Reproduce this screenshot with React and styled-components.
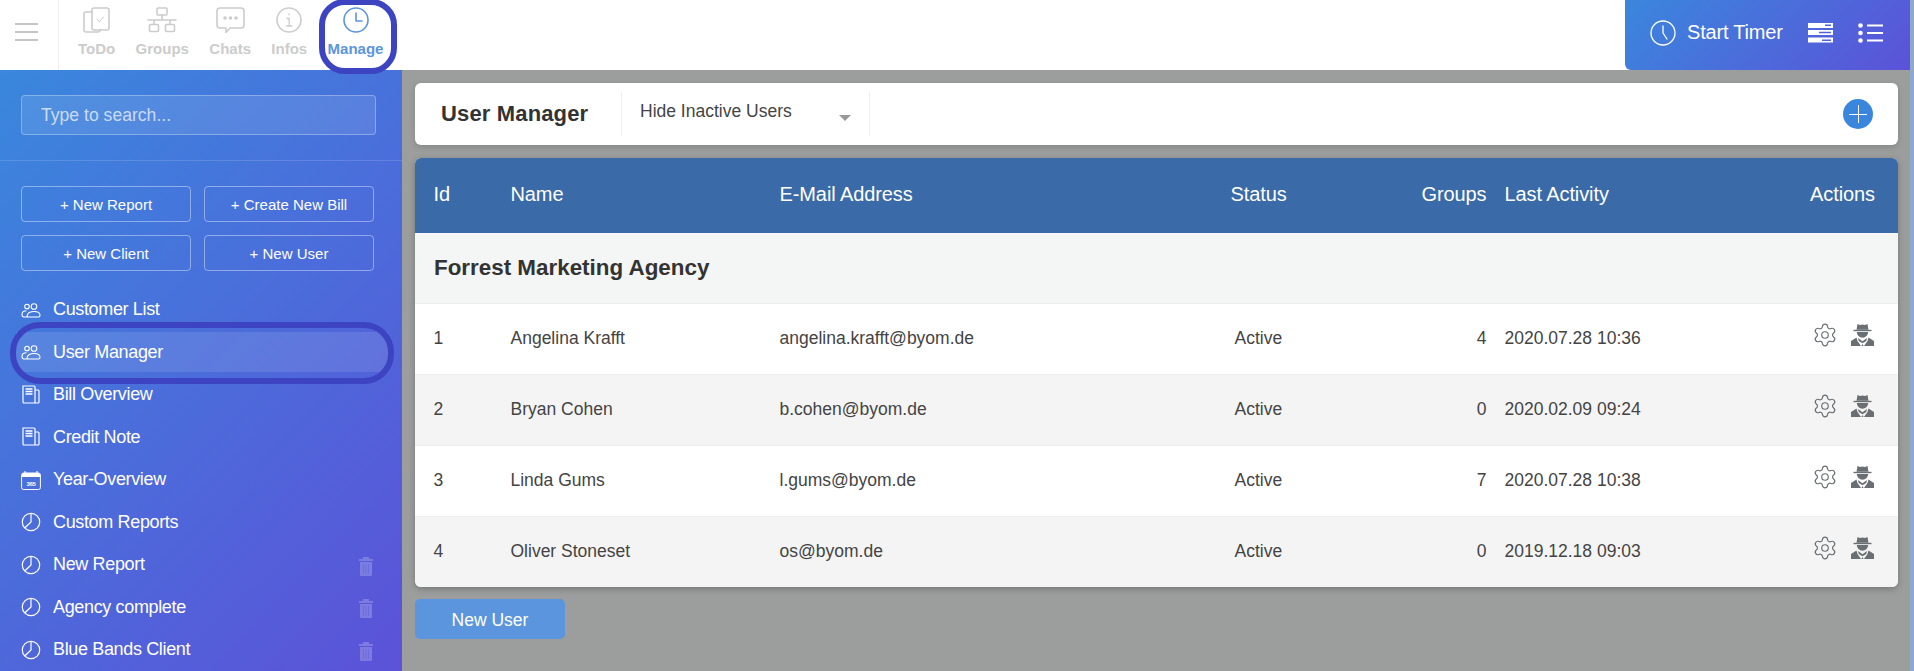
import React from 'react';
import styled, { createGlobalStyle } from 'styled-components';
import { Settings } from 'lucide-react';

const Global = createGlobalStyle`
  html, body { margin: 0; padding: 0; height: 100%; overflow: hidden; }
  body { font-family: "Liberation Sans", Arial, sans-serif; background: #9c9e9e; color: #333; }
  * { box-sizing: border-box; }
`;

const GRADIENT = 'linear-gradient(135deg, #3a87dd 0%, #5c52d8 100%)';

const Page = styled.div`
  width: 1914px; height: 671px; display: flex; flex-direction: column; overflow: hidden;
  background: #9c9e9e; border-right: 4px solid #8fa9cc;
`;
const Top = styled.header`
  height: 70px; flex: none; background: #fff; display: flex; align-items: stretch;
`;
const Burger = styled.button`
  width: 59px; flex: none; border: 0; border-right: 1px solid #eee; background: none; padding: 23px 0 0 15px;
  display: flex; flex-direction: column; gap: 6px;
  span { display: block; height: 2px; width: 23px; background: #c6c6c6; }
`;
const TopNav = styled.nav`
  display: flex; align-items: stretch; flex: 1; padding-left: 8.800px;
`;
const TopItem = styled.div`
  position: relative; padding: 7px 10.200px 0; display: flex; flex-direction: column; align-items: center;
  color: ${p => p.$active ? '#5b95de' : '#ccc'};
  font-size: 15px; font-weight: 700;
  svg { display: block; margin-bottom: 7px; flex: none; }
`;
const Ring = styled.div`
  position: absolute; left: 1.500px; right: -3.500px; top: -1px; height: 75px;
  border: 6px solid #3d44c2; border-radius: 26px; pointer-events: none;
`;
const Timer = styled.div`
  width: 285px; flex: none; background: ${GRADIENT}; border-bottom-left-radius: 6px; color: #fff;
  display: flex; align-items: center; padding: 0 0 5px 25px; font-size: 20px; letter-spacing: -0.2px; white-space: nowrap;
  svg { flex: none; }
`;
const TimerLabel = styled.span` margin-left: 11px; margin-right: 25px; `;
const Body = styled.div` flex: 1; display: flex; min-height: 0; `;
const Side = styled.aside`
  width: 402px; flex: none; background: ${GRADIENT}; color: #fff; display: flex; flex-direction: column;
`;
const SearchWrap = styled.div`
  height: 91px; flex: none; padding: 25px 26px 0 21px; border-bottom: 1px solid rgba(255,255,255,.14);
`;
const Search = styled.div`
  height: 40px; border: 1px solid rgba(255,255,255,.3); background: rgba(255,255,255,.1); border-radius: 4px;
  padding: 1px 0 0 19px; display: flex; align-items: center; font-size: 17.600px; color: rgba(255,255,255,.7);
`;
const QuickGrid = styled.div`
  display: grid; grid-template-columns: 170px 170px; gap: 13px; padding: 25px 0 0 21px;
`;
const Quick = styled.div`
  height: 36px; border: 1px solid rgba(255,255,255,.4); border-radius: 4px; display: flex; align-items: center; justify-content: center;
  font-size: 15px;
`;
const Menu = styled.div` position: relative; padding-top: 17.500px; isolation: isolate; `;
const MenuRow = styled.div`
  position: relative; height: 42.500px; display: flex; align-items: center; padding-left: 21px; font-size: 18px; letter-spacing: -0.35px;
  ${p => p.$active ? `&::before { content: ''; position: absolute; z-index: -1; left: 16px; width: 372px; top: 1px; height: 40px; background: rgba(255,255,255,.1); }` : ''}
  svg.lead { width: 20px; height: 20px; margin-right: 12px; flex: none; }
`;
const Trash = styled.svg`
  position: absolute; left: 358px; top: 12px; width: 16px; height: 20px;
`;
const MenuRing = styled.div`
  position: absolute; left: 10px; top: -9px; width: 384px; height: 62px; border: 6px solid #3d44c2; border-radius: 30px; pointer-events: none;
`;
const Main = styled.main` flex: 1; padding: 13px 12px 0 13px; display: flex; flex-direction: column; `;
const Bar = styled.div`
  height: 62px; background: #fff; border-radius: 6px; display: flex; align-items: center; flex: none;
  box-shadow: 0 2px 6px rgba(0,0,0,.15);
`;
const BarTitle = styled.h1`
  margin: 0; width: 206px; padding-left: 26px; font-size: 22px; font-weight: 700; color: #333; letter-spacing: .15px;
`;
const Select = styled.div`
  width: 249px; height: 44px; border-left: 1px solid #eee; border-right: 1px solid #eee; display: flex; align-items: center; position: relative;
  padding: 0 0 6px 18px; font-size: 17.500px; color: #444;
  &::after { content: ''; position: absolute; right: 18px; top: 23px; border: 6px solid transparent; border-top: 6px solid #999; border-bottom: 0; }
`;
const AddBtn = styled.div`
  margin-left: auto; margin-right: 25px; width: 30px; height: 30px; border-radius: 50%; background: #3a86dc; position: relative;
  &::before, &::after { content: ''; position: absolute; background: #fff; }
  &::before { left: 6px; right: 6px; top: 14.500px; height: 1.400px; }
  &::after { top: 6px; bottom: 6px; left: 14.500px; width: 1.400px; }
`;
const Table = styled.div`
  margin-top: 13px; border-radius: 6px; overflow: hidden; flex: none; background: #fff; box-shadow: 0 2px 6px rgba(0,0,0,.25);
`;
const Row = styled.div`
  display: grid; grid-template-columns: 77px 269px 451px 169px 87px 1fr auto; align-items: center; padding: 0 23px 0 18.500px;
  height: ${p => p.$h}px;
`;
const Head = styled(Row)` background: #3a6aa7; color: #fff; font-size: 20px; letter-spacing: -.1px; padding-bottom: 2px; `;
const Group = styled.div`
  height: 70px; background: #f4f5f5; padding-left: 19px; display: flex; align-items: center; font-size: 22.400px; font-weight: 700; color: #333;
`;
const DataRow = styled(Row)`
  background: ${p => p.$alt ? '#f4f4f4' : '#fff'}; border-top: 1px solid #eee; font-size: 17.500px; color: #444; padding-bottom: 2px;
`;
const Num = styled.div` text-align: right; `;
const StatusCell = styled.div` padding-left: ${p => p.$in || 0}px; `;
const LastCell = styled.div` padding-left: 18px; `;
const Actions = styled.div`
  display: flex; align-items: center; gap: 13px; color: #6a6f73; margin: -7px 1px 0 0;
`;
const NewUser = styled.div`
  margin-top: 12px; width: 150px; height: 40px; background: #5b95de; color: #fff; border-radius: 5px; font-size: 17.500px; padding-top: 2px;
  display: flex; align-items: center; justify-content: center; flex: none;
`;

const s = { fill: 'none', stroke: 'currentColor', strokeWidth: 1.6, strokeLinecap: 'round', strokeLinejoin: 'round' };
const TodoIcon = () => <svg width="27" height="26" viewBox="0 0 27 26" {...s}><rect x="9" y="1" width="17" height="22" rx="2" /><path d="M9 5H3a2 2 0 0 0-2 2v16a2 2 0 0 0 2 2h12a2 2 0 0 0 2-2" /><path d="M14 12l2.500 3 4-5" strokeWidth="1" /></svg>;
const GroupsIcon = () => <svg width="30" height="26" viewBox="0 0 30 26" {...s}><rect x="10" y="1" width="10" height="7" rx="1" /><rect x="2.500" y="17.500" width="9" height="7" rx="1" /><rect x="18.500" y="17.500" width="9" height="7" rx="1" /><path d="M15 8v5M1 13h28M7 13v4.500M23 13v4.500" /></svg>;
const ChatsIcon = () => <svg width="29" height="26" viewBox="0 0 29 26" {...s}><path d="M4 1h21a3 3 0 0 1 3 3v14a3 3 0 0 1-3 3H14l-4 4.500V21H4a3 3 0 0 1-3-3V4a3 3 0 0 1 3-3z" /><circle cx="9" cy="11" r="1" fill="currentColor" /><circle cx="14.500" cy="11" r="1" fill="currentColor" /><circle cx="20" cy="11" r="1" fill="currentColor" /></svg>;
const InfoIcon = () => <svg width="26" height="26" viewBox="0 0 26 26" {...s}><circle cx="13" cy="13" r="12" /><path d="M13 7v.8M11 11.500h2.200V19M10.500 19h5.200" strokeWidth="1.300" /></svg>;
const ClockIcon = ({ hand = 'M13 6v8h6', width = 1.6 }) => <svg width="26" height="26" viewBox="0 0 26 26" {...s} strokeWidth={width}><circle cx="13" cy="13" r="12" /><path d={hand} /></svg>;
const UsersIcon = () => <svg className="lead" viewBox="0 0 20 20" fill="none" stroke="currentColor" strokeWidth="1.100"><circle cx="6" cy="6.500" r="2.300" /><circle cx="13" cy="6.500" r="2.800" /><path d="M1 14.500c0-2.500 2-3.800 4.500-3.800M7.500 17H3c-2 0-2-1-2-2.500M7.500 17c-1.500 0-1.700-1.200-1-2.500 1-2 3.500-3 6.500-3s6 1.200 6 3.800c0 1-.5 1.700-1.500 1.700z" /></svg>;
const DocIcon = () => <svg className="lead" viewBox="0 0 20 20" fill="none" stroke="currentColor" strokeWidth="1.200"><path d="M2 1h11a1 1 0 0 1 1 1v16H3a1 1 0 0 1-1-1zM14 5h3a1 1 0 0 1 1 1v11a1 1 0 0 1-1 1h-3" /><path d="M4.500 4h7M4.500 6.500h7M4.500 9h7" strokeWidth="1.500" /></svg>;
const CalIcon = () => <svg className="lead" viewBox="0 0 20 20"><path d="M1 5a2 2 0 0 1 2-2h14a2 2 0 0 1 2 2v2H1z" fill="#fff" /><path d="M4 1V4M16 1V4" stroke="#fff" strokeWidth="1.200" /><rect x=".6" y="3" width="18.800" height="16.500" rx="2" fill="none" stroke="#fff" strokeWidth="1" /><text x="10" y="15.500" textAnchor="middle" fontSize="6" fontWeight="700" fontFamily="Liberation Sans" fill="#fff">365</text></svg>;
const PieIcon = () => <svg className="lead" viewBox="0 0 20 20" fill="none" stroke="currentColor" strokeWidth="1.200"><circle cx="10" cy="10" r="8.700" /><path d="M10 1.300V10l-6.300 6" /></svg>;
const TrashIcon = () => <Trash viewBox="0 0 16 20" fill="rgba(255,255,255,.22)"><path d="M5 1h6v2h4v2H1V3h4z" /><path d="M2 6h12v13a1 1 0 0 1-1 1H3a1 1 0 0 1-1-1z" /><path d="M5.500 8v10M8 8v10M10.500 8v10" stroke="rgba(80,90,215,.5)" strokeWidth=".8" /></Trash>;
const ServerIcon = () => <svg width="25" height="20" viewBox="0 0 25 20" fill="#fff"><path fillRule="evenodd" d="M0 0h25v5H0zM17 1.500v1.500h6V1.500zM0 7h25v5H0zM11 8.800v1.400h12V8.800zM0 14.500h25v5H0zM14 16.500v1.500h9v-1.500z" /></svg>;
const ListIcon = () => <svg width="25" height="20" viewBox="0 0 25 20" fill="#fff" style={{ marginLeft: 25 }}><circle cx="2.500" cy="2.500" r="2.300" /><circle cx="2.500" cy="10" r="2.300" /><circle cx="2.500" cy="17.500" r="2.300" /><rect x="9" y="1.500" width="16" height="2" /><rect x="9" y="9" width="16" height="2" /><rect x="9" y="16.500" width="16" height="2" /></svg>;
const SpyIcon = () => <svg width="23" height="22" viewBox="0 0 23 22" fill="currentColor"><path d="M5.500 5.800 6.500 0l2.500 1 2.500-.5 2.500.5 2.500-1 1 5.800z" /><rect x="2.500" y="5.800" width="18" height="1.400" /><path d="M5.800 8h11.400a5.700 5.700 0 0 1-11.400 0z" /><path d="M0 22v-5l5.500-3.500 1 3.500L10 22zM23 22v-5l-5.500-3.500-1 3.500L13 22zM7 14l4.500 3.200L16 14l-.7 3-3.800 2.300L7.700 17zM11.500 20l1.100 2h-2.200z" /></svg>;

const users = [
  [1, 'Angelina Krafft', 'angelina.krafft@byom.de', 4, '2020.07.28 10:36'],
  [2, 'Bryan Cohen', 'b.cohen@byom.de', 0, '2020.02.09 09:24'],
  [3, 'Linda Gums', 'l.gums@byom.de', 7, '2020.07.28 10:38'],
  [4, 'Oliver Stoneset', 'os@byom.de', 0, '2019.12.18 09:03'],
];
const menu = [
  ['Customer List', UsersIcon], ['User Manager', UsersIcon, 'a'], ['Bill Overview', DocIcon], ['Credit Note', DocIcon],
  ['Year-Overview', CalIcon], ['Custom Reports', PieIcon], ['New Report', PieIcon, 't'], ['Agency complete', PieIcon, 't'], ['Blue Bands Client', PieIcon, 't'],
];

export default function App() {
  return (
    <Page>
      <Global />
      <Top>
        <Burger aria-label="menu"><span /><span /><span /></Burger>
        <TopNav>
          <TopItem><TodoIcon />ToDo</TopItem>
          <TopItem><GroupsIcon />Groups</TopItem>
          <TopItem><ChatsIcon />Chats</TopItem>
          <TopItem><InfoIcon />Infos</TopItem>
          <TopItem $active><ClockIcon />Manage<Ring /></TopItem>
        </TopNav>
        <Timer><ClockIcon hand="M13 6v7l4 6" width={1.3} /><TimerLabel>Start Timer</TimerLabel><ServerIcon /><ListIcon /></Timer>
      </Top>
      <Body>
        <Side>
          <SearchWrap><Search>Type to search...</Search></SearchWrap>
          <QuickGrid>
            <Quick>+ New Report</Quick><Quick>+ Create New Bill</Quick>
            <Quick>+ New Client</Quick><Quick>+ New User</Quick>
          </QuickGrid>
          <Menu>
            {menu.map(([label, Icon, flag]) => (
              <MenuRow key={label} $active={flag === 'a'}>
                <Icon />{label}
                {flag === 't' && <TrashIcon />}
                {flag === 'a' && <MenuRing />}
              </MenuRow>
            ))}
          </Menu>
        </Side>
        <Main>
          <Bar>
            <BarTitle>User Manager</BarTitle>
            <Select>Hide Inactive Users</Select>
            <AddBtn />
          </Bar>
          <Table>
            <Head $h={75}>
              <div>Id</div><div>Name</div><div>E-Mail Address</div><div>Status</div><Num>Groups</Num><LastCell>Last Activity</LastCell><div>Actions</div>
            </Head>
            <Group>Forrest Marketing Agency</Group>
            {users.map((u, i) => (
              <DataRow key={u[0]} $h={71} $alt={i % 2 === 1}>
                <div>{u[0]}</div><div>{u[1]}</div><div>{u[2]}</div><StatusCell $in={4}>Active</StatusCell><Num>{u[3]}</Num><LastCell>{u[4]}</LastCell>
                <Actions><Settings size={26} strokeWidth={1.1} /><SpyIcon /></Actions>
              </DataRow>
            ))}
          </Table>
          <NewUser>New User</NewUser>
        </Main>
      </Body>
    </Page>
  );
}
